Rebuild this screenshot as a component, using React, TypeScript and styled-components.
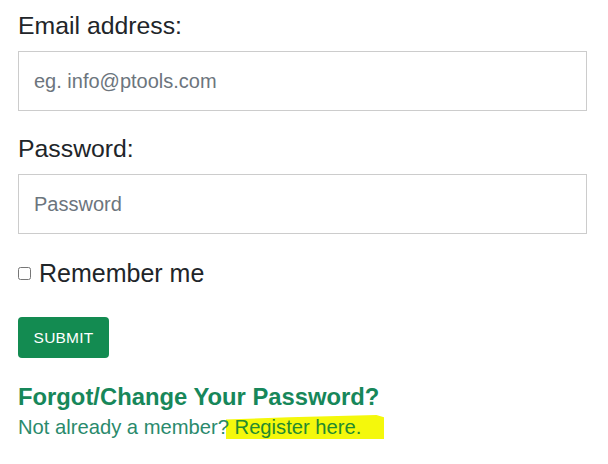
import React from 'react'
import styled, { createGlobalStyle } from 'styled-components'

const GlobalStyle = createGlobalStyle`
  body {
    margin: 0;
    background: #ffffff;
    font-family: 'Liberation Sans', Arial, sans-serif;
  }
`

const Form = styled.form`
  width: 569px;
  padding: 12px 0 0 18px;
  display: flex;
  flex-direction: column;
`

const Label = styled.label<{ gap: number }>`
  display: block;
  font-size: 24.8px;
  line-height: 28px;
  color: #212529;
  margin-bottom: ${(props) => props.gap}px;
`

const TextInput = styled.input`
  box-sizing: border-box;
  width: 100%;
  height: 60px;
  border: 1px solid #cccccc;
  border-radius: 0;
  padding: 0 15px;
  font-family: 'Liberation Sans', Arial, sans-serif;
  font-size: 20px;
  color: #212529;
  outline: none;
  margin-bottom: 24px;

  &::placeholder {
    color: #6c757d;
  }
`

const CheckRow = styled.label`
  display: flex;
  align-items: center;
  gap: 8px;
  font-size: 25px;
  line-height: 28px;
  color: #212529;
  margin-top: 1px;
`

const Checkbox = styled.input`
  width: 13px;
  height: 13px;
  margin: 1px 0 0 0;
`

const SubmitButton = styled.button`
  align-self: flex-start;
  margin-top: 30px;
  width: 91px;
  height: 41px;
  border: none;
  border-radius: 4px;
  background: #138b51;
  color: #ffffff;
  font-family: 'Liberation Sans', Arial, sans-serif;
  font-size: 15.5px;
  letter-spacing: 0.2px;
  text-transform: uppercase;
  cursor: pointer;
`

const ForgotLink = styled.a`
  display: block;
  margin-top: 25px;
  font-size: 23.8px;
  line-height: 28px;
  font-weight: bold;
  color: #17875a;
  text-decoration: none;
`

const RegisterLine = styled.p`
  margin: 4px 0 0;
  font-size: 20.2px;
  line-height: 24px;
  color: #2a8a6c;
  isolation: isolate;
`

const Highlight = styled.a`
  position: relative;
  color: #258a2e;
  text-decoration: none;

  &::before {
    content: '';
    position: absolute;
    left: -9px;
    right: -23px;
    top: -1px;
    bottom: -5px;
    background: #f4f80c;
    clip-path: polygon(0% 16%, 40% 8%, 95% 0%, 100% 8%, 100% 100%, 60% 94%, 0% 88%);
    z-index: -1;
  }
`

const App = () => {
  return (
    <>
      <GlobalStyle />
      <Form onSubmit={(e) => e.preventDefault()}>
        <Label htmlFor='email' gap={11}>
          Email address:
        </Label>
        <TextInput id='email' type='email' placeholder='eg. info@ptools.com' />
        <Label htmlFor='password' gap={11}>
          Password:
        </Label>
        <TextInput id='password' type='password' placeholder='Password' />
        <CheckRow>
          <Checkbox type='checkbox' />
          Remember me
        </CheckRow>
        <SubmitButton type='submit'>Submit</SubmitButton>
        <ForgotLink href='#'>Forgot/Change Your Password?</ForgotLink>
        <RegisterLine>
          Not already a member? <Highlight href='#'>Register here.</Highlight>
        </RegisterLine>
      </Form>
    </>
  )
}

export default App
